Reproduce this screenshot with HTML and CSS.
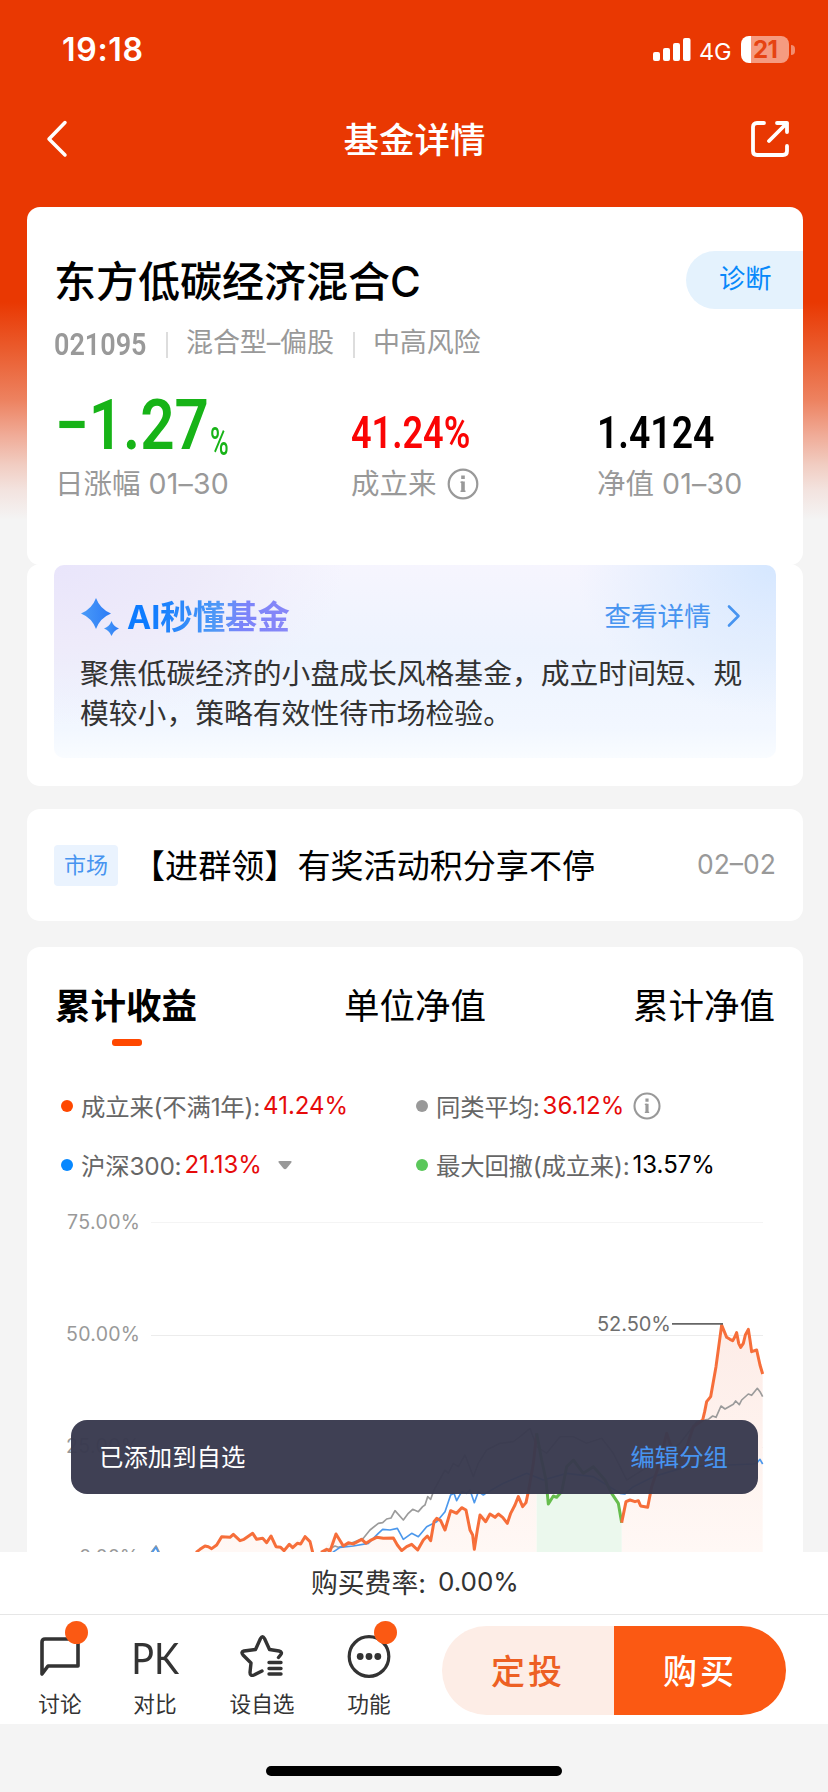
FILE: index.html
```html
<!DOCTYPE html>
<html lang="zh-CN">
<head>
<meta charset="utf-8">
<title>基金详情</title>
<link rel="stylesheet" href="styles.css">
</head>
<body>
<div class="page">
  <main class="content">
    <header class="status">
      <span class="time">19:18</span>
      <div class="status-right">
        <svg class="signal" width="38" height="24" viewBox="0 0 38 24" fill="#fff"><rect x="0" y="14" width="7" height="9" rx="2"/><rect x="10" y="10" width="7" height="13" rx="2"/><rect x="20" y="5" width="7" height="18" rx="2"/><rect x="30" y="0" width="7.500" height="23" rx="2"/></svg>
        <span class="net">4G</span>
        <div class="battery"><span>21</span></div>
        <i class="battery-cap"></i>
      </div>
    </header>
    <nav class="nav">
      <svg width="24" height="40" viewBox="0 0 24 40" fill="none" stroke="#fff" stroke-width="3.500" stroke-linecap="round" stroke-linejoin="round"><path d="M20 3.500 4 20 20 36"/></svg>
      <h1>基金详情</h1>
      <svg width="40" height="40" viewBox="0 0 40 40" fill="none" stroke="#fff" stroke-width="3.800" stroke-linecap="round" stroke-linejoin="round"><path d="M14 4H7Q3 4 3 8V32Q3 36 7 36H33Q37 36 37 32V27M27 4H37V13M37 4 19 22"/></svg>
    </nav>

    <section class="card summary">
      <div class="title-row"><h2>东方低碳经济混合C</h2><a class="diagnose">诊断</a></div>
      <div class="meta"><b class="din code">021095</b><i></i><span>混合型–偏股</span><i></i><span>中高风险</span></div>
      <div class="stats">
        <div class="stat">
          <div class="num green"><span class="din big">−1.27</span><span class="din pct">%</span></div>
          <div class="label">日涨幅 <span>01–30</span></div>
        </div>
        <div class="stat">
          <div class="num red"><span class="din mid">41.24%</span></div>
          <div class="label">成立来<svg class="info" width="32" height="32" viewBox="0 0 32 32" fill="none" stroke="#999" stroke-width="2.200"><circle cx="16" cy="16" r="14.300"/><path stroke-width="3.600" d="M16 13.500V24M16 7.500V11"/><path stroke-width="1.500" d="M13.500 14.200H16M13.500 23.300H18.500"/></svg></div>
        </div>
        <div class="stat">
          <div class="num"><span class="din mid nav-value">1.4124</span></div>
          <div class="label">净值 <span>01–30</span></div>
        </div>
      </div>
    </section>

    <section class="card ai">
      <div class="ai-panel">
        <div class="ai-head">
          <svg width="42" height="42" viewBox="0 0 42 42"><defs><linearGradient id="spark"><stop stop-color="#4a9bf8"/><stop offset="1" stop-color="#2c7bf6"/></linearGradient></defs><g fill="url(#spark)"><path d="M16 3Q20 14 31 18.500 20 23 16 34 12 23 1 18.500 12 14 16 3Z"/><path d="M31.500 26Q33.500 31.500 39 33.500 33.500 35.500 31.500 41 29.500 35.500 24 33.500 29.500 31.500 31.500 26Z"/></g></svg>
          <strong>AI秒懂基金</strong>
          <a>查看详情</a>
          <svg width="14" height="24" viewBox="0 0 14 24" fill="none" stroke="#4794f0" stroke-width="2.600" stroke-linecap="round" stroke-linejoin="round"><path d="M2 2.500 11.500 12 2 21.500"/></svg>
        </div>
        <p>聚焦低碳经济的小盘成长风格基金，成立时间短、规<br>模较小，策略有效性待市场检验。</p>
      </div>
    </section>

    <section class="card notice"><span class="tag">市场</span><span class="notice-text">【进群领】有奖活动积分享不停</span><time>02–02</time></section>

    <section class="card chart-card">
      <div class="tabs"><b>累计收益</b><span>单位净值</span><span>累计净值</span></div>
      <div class="legend">
        <div><i class="dot orange"></i>成立来(不满1年):<em>41.24%</em></div>
        <div><i class="dot gray"></i>同类平均:<em>36.12%</em><svg class="info" width="28" height="28" viewBox="0 0 32 32" fill="none" stroke="#999" stroke-width="2.400"><circle cx="16" cy="16" r="14.300"/><path stroke-width="3.600" d="M16 13.500V24M16 7.500V11"/><path stroke-width="1.500" d="M13.500 14.200H16M13.500 23.300H18.500"/></svg></div>
        <div><i class="dot blue"></i>沪深300:<em>21.13%</em><svg class="caret" width="14" height="9" viewBox="0 0 14 9"><path d="M1.500 0H12.500Q14.500 0 13 2L8.500 7.500Q7 9 5.500 7.500L1 2Q-.5 0 1.500 0Z" fill="#999"/></svg></div>
        <div><i class="dot lime"></i>最大回撤(成立来):<em class="dark">13.57%</em></div>
      </div>
      <svg class="chart" width="776" height="352" viewBox="27 1200 776 352">
        <defs><linearGradient id="warm" x1="0" y1="0" x2="0" y2="1"><stop stop-color="#fdece7"/><stop offset="1" stop-color="#fff8f5"/></linearGradient></defs>
        <g stroke="#ececec" stroke-width="1.200"><path stroke="#f4f4f4" d="M151 1222.500H763"/><path d="M151 1335.500H763M151 1447.500H763"/></g>
        <g class="axis"><text x="67" y="1228.500" textLength="73">75.00%</text><text x="66" y="1340.500" textLength="74">50.00%</text><text x="66" y="1452.500" textLength="74">25.00%</text><text x="79" y="1563.800" textLength="60">0.00%</text></g>
        <g transform="translate(420 1300) scale(.33333)" fill="none" stroke-linejoin="round" stroke-linecap="butt">
          <path fill="url(#warm)" d="M-670 756V755L-645 738-625 745-595 710-570 712-560 703-540 722-502 700-490 718-460 728-447 708-432 740-408 752-392 733-345 710-322 756H-295L-252 702-230 738-175 718-130 712-80 714-55 752-25 733-7 750 22 708 32 722 50 655 75 690 92 632 125 623 138 630 163 748 180 645 210 642 248 645 262 670 295 590 308 620 326 570 350 400V756ZM605 756V668L618 605 655 602 662 618 683 622 695 560 740 400 770 470 800 440 820 365 848 360 872 290 888 200 905 75 920 112 938 122 950 98 962 142 985 88 995 155 1010 150 1028 222V756Z"/>
          <path fill="#ebf8ed" d="M350 756V400L378 540 385 612 400 588 425 575 440 500 490 520 555 540 575 580 595 610 605 668V756Z"/>
          <g stroke="#9b9b9b" stroke-width="5"><path d="M-806 757-792 738-782 757M-290 757-255 738-245 742-220 735-170 715-150 690-125 670-112 668-100 657-87 654-75 632-50 660-35 640-22 628-5 635 8 620 15 615 23 590 32 598 42 570 75 510 85 520 100 490 115 500 135 465 160 530 175 490 200 450 240 430 280 425 300 410 330 385 350 440 380 460 420 410 460 410 500 430 545 415 580 460 600 500 620 540 700 490 780 430 830 365 865 358 878 348 888 352 903 318 915 327 940 313 947 303 958 314 965 300 985 282 995 286 1012 265 1020 275 1028 290"/></g>
          <path stroke="#4c98ec" stroke-width="5" d="M-803 757-792 742-785 757M-262 757-240 742-200 738-155 730-125 700-112 688-90 690-68 685-50 718-25 700-5 710 20 680 50 665 75 635 92 585 102 580 110 602 125 575 140 580 150 570 163 608 175 575 190 585 200 578 250 550 320 520 370 540 440 520 520 530 600 580 615 582 640 560 700 530 800 500 1000 492 1010 490 1020 478 1028 492"/>
          <g stroke="#f66e3a" stroke-width="9"><path d="M-672 757-660 748-645 738-635 740-625 746-610 735-595 710-570 712-560 703-540 722-528 718-502 700-490 718-472 715-460 728-447 708-432 740-418 742-408 752-392 733-382 743-368 730-358 732-345 710-330 725-322 757M-297 757-280 748-270 754-252 702-230 738-215 728-200 732-175 718-162 730-150 722-130 712-110 715-80 714-68 735-55 752-40 740-25 733-7 750 10 720 22 708 32 722 42 665 50 655 62 662 75 690 92 632 110 640 125 623 138 630 150 690 158 705 163 748 172 690 180 645 197 665 210 642 225 652 235 642 248 652 262 670 272 640 285 615 295 590 308 620 318 608 326 570 340 490 350 400"/><path stroke="#66bd4d" d="M350 400 365 480 378 540 385 612 400 588 410 592 425 575 440 500 460 480 490 520 520 500 555 540 575 580 595 610 605 668"/><path d="M605 668 618 605 630 600 645 605 655 602 662 618 683 622 695 560 715 500 740 400 750 430 770 470 800 440 820 380 848 360 854 335 860 305 872 290 888 200 905 75 920 112 930 118 938 122 944 112 950 98 956 130 962 142 970 130 976 105 985 88 990 120 995 155 1010 150 1020 195 1028 222"/></g>
        </g>
        <path stroke="#666" stroke-width="1.800" d="M672 1323.800H723"/>
        <text class="peak" x="597" y="1331" textLength="74">52.50%</text>
      </svg>
    </section>
  </main>

  <div class="fee">购买费率:<span>0.00%</span></div>
  <footer class="toolbar">
    <div class="tool t1"><div class="icon"><svg width="46" height="46" viewBox="0 0 46 46" fill="none" stroke="#333" stroke-width="3.600" stroke-linejoin="round"><path d="M5 41V9Q5 6 8 6H38Q41 6 41 9V33H11Z"/></svg><i class="badge"></i></div><span>讨论</span></div>
    <div class="tool t2"><div class="icon pk">PK</div><span>对比</span></div>
    <div class="tool t3"><div class="icon"><svg width="46" height="46" viewBox="0 0 46 46" fill="none" stroke="#333" stroke-width="3.400" stroke-linejoin="round" stroke-linecap="round"><path d="M39.500 24.500 41.500 22Q44 19 40 18L30.500 16.500 25.500 5.500Q23.500 2 21.500 5.500L16.500 16.500 5 18Q1.500 19 4 22L12 30 11 39.500Q11 43.500 15 42L23 38M30 29.500H42M30 35.500H42M30 41H42"/></svg></div><span>设自选</span></div>
    <div class="tool t4"><div class="icon"><svg width="46" height="46" viewBox="0 0 46 46" fill="none" stroke="#333" stroke-width="3.200"><circle cx="23" cy="23.500" r="19.800"/><g fill="#333" stroke="none"><circle cx="14.200" cy="23.500" r="3.400"/><circle cx="23" cy="23.500" r="3.400"/><circle cx="31.800" cy="23.500" r="3.400"/></g></svg><i class="badge"></i></div><span>功能</span></div>
    <div class="actions"><button class="plan">定投</button><button class="buy">购买</button></div>
  </footer>
  <div class="home"><i></i></div>

  <div class="toast"><span>已添加到自选</span><a>编辑分组</a></div>
</div>
</body>
</html>
```

FILE: styles.css
```css
* { box-sizing: border-box; margin: 0; padding: 0; }
body { font-family: Inter, "Noto Sans CJK SC", sans-serif; color: #000; background: #f4f4f4; }
svg { flex: none; display: block; }
em, i { font-style: normal; }
.page { position: relative; width: 828px; height: 1792px; overflow: hidden; white-space: nowrap; }
.content {
  height: 1552px; overflow: hidden;
  background: linear-gradient(#e93802 0, #e93802 302px, #ea5c2e 350px, #ed8260 400px, #f0ab97 435px, #f1cdc2 465px, #f3e3df 490px, #f4f4f4 520px);
}
.card { width: 776px; margin-left: 27px; background: #fff; border-radius: 13px; }

.status { display: flex; align-items: center; height: 99px; padding: 0 33px 0 62px; color: #fff; }
.time { font-size: 32px; font-weight: 600; letter-spacing: .7px; }
.status-right { display: flex; align-items: center; margin-left: auto; }
.net { width: 33px; margin: 3px 9px 0 8px; font-size: 23.500px; letter-spacing: -.3px; }
.battery { width: 48px; height: 27px; border-radius: 8px; background: linear-gradient(90deg, #fff 10px, #f59b80 10px); color: #e64312; font-size: 24px; font-weight: 700; line-height: 27px; text-align: center; letter-spacing: -.8px; }
.battery-cap { width: 4px; height: 10px; margin-left: 2px; background: #f28d6f; border-radius: 0 5px 5px 0; }
.nav { display: flex; align-items: center; justify-content: space-between; height: 80px; margin-bottom: 28px; padding: 0 38px 0 45px; color: #fff; }
.nav h1 { padding: 4px 0 0 10px; font-size: 35.500px; font-weight: 500; line-height: 50px; }

.summary { height: 358px; padding: 44px 0 0 27px; }
.title-row { display: flex; align-items: center; justify-content: space-between; height: 58px; }
.title-row h2 { padding-top: 3px; font-size: 42px; font-weight: 500; line-height: 58px; }
.diagnose { width: 117px; height: 58px; border-radius: 29px 0 0 29px; background: #e4f2fd; color: #0788fa; font-size: 26.300px; line-height: 56px; padding-left: 33px; }
.meta { display: flex; align-items: center; height: 30px; margin-top: 19px; color: #999; font-size: 27px; line-height: 30px; }
.meta i { width: 2px; height: 26px; margin: 4px 18px 0 19px; background: #ddd; }
.meta span { letter-spacing: -.1px; }
.din { display: inline-block; font-family: Roboto, sans-serif; font-weight: 600; transform-origin: 0 50%; line-height: 1; }
.code { width: 93px; font-size: 31px; transform: scaleX(.87); margin-top: 2px; }
.stats { display: grid; grid-template-columns: 296px 246px 1fr; margin-top: 39px; padding-left: 1px; }
.num { height: 56px; display: flex; align-items: flex-end; }
.big { font-size: 70px; width: 155px; transform: scaleX(.86); margin-bottom: -7px; }
.pct { font-size: 39px; transform: scaleX(.65); font-weight: 500; margin-bottom: -9px; }
.mid { font-size: 44px; transform: scaleX(.85); margin-bottom: -2px; }
.red .mid { transform: scaleX(.82); }
.green { color: #17b317; }
.red { color: #fa0404; }
.label { display: flex; align-items: center; height: 40px; margin-top: 11px; color: #999; font-size: 28.500px; line-height: 40px; white-space: pre; }
.label span { letter-spacing: .2px; }
.label .info { margin-left: 10px; }

.ai { height: 222px; margin-top: -1px; padding: 1px 27px 0; }
.ai-panel { height: 193px; padding: 29px 26px 0; border-radius: 10px; background: radial-gradient(ellipse 200px 150px at 100% 0, #d5e7ff, transparent), radial-gradient(ellipse 290px 160px at 0 0, #e9e5fb, #eeebfa 50%, transparent), linear-gradient(#f6f5fe, #edf3fe 45%, #f2f7ff 85%, #f9fcff); }
.ai-head { display: flex; align-items: center; height: 44px; }
.ai-head strong { margin: 3px auto 0 5px; font-size: 32.400px; line-height: 44px; background: linear-gradient(100deg, #0d7bff 15%, #5199f6 55%, #7b83fa 70%, #8988f7); -webkit-background-clip: text; color: transparent; }
.ai-head a { margin: -3px 16px 0 0; color: #4794f0; font-size: 26.700px; }
.ai-head svg:last-child { margin-right: 9px; }
.ai p { margin-top: 16px; font-size: 28.800px; line-height: 40px; color: #333; }

.notice { display: flex; align-items: center; height: 112px; margin-top: 23px; padding: 0 27px; }
.tag { width: 64px; height: 41px; border-radius: 4px; background: #eaf3fe; color: #4794f0; font-size: 22px; line-height: 40px; text-align: center; }
.notice-text { margin: -3px 0 0 14px; font-size: 33.100px; }
.notice time { margin: -3px 0 0 auto; color: #999; font-size: 26.500px; }

.chart-card { height: 605px; margin-top: 26px; border-radius: 13px 13px 0 0; }
.tabs { display: flex; justify-content: space-between; height: 128px; padding: 35px 28px 0 28px; font-size: 35.500px; line-height: 50px; }
.tabs b { position: relative; }
.tabs b::after { content: ""; position: absolute; left: 57px; top: 57px; width: 30px; height: 7px; border-radius: 3px; background: #ff4800; }
.legend { display: grid; grid-template-columns: 355px 1fr; grid-template-rows: 59px 59px; padding: 1px 0 0 34px; height: 125px; font-size: 24.400px; letter-spacing: -.2px; color: #666; }
.legend div { display: flex; align-items: center; }
.legend em { margin-left: 3px; color: #e60a0a; font-size: 24px; letter-spacing: 0; }
.legend .dark { color: #000; }
.legend .info { margin-left: 9px; }
.caret { margin: 2px 0 0 16px; }
.dot { width: 12px; height: 12px; border-radius: 50%; margin-right: 8px; }
.orange { background: #ff4800; } .gray { background: #999; } .blue { background: #0788ff; } .lime { background: #5bc75b; }
.axis { fill: #999; font-size: 19.500px; }
.peak { fill: #6f6f6f; font-size: 20px; }

.fee { display: flex; align-items: center; height: 62px; padding: 0 0 3px 311px; background: #fff; font-size: 26.800px; color: #333; }
.fee span { margin-left: 12px; font-size: 26px; }
.toolbar { display: flex; height: 110px; padding: 11px 0 0 28px; background: #fff; border-top: 1px solid #e6e6e6; }
.tool { display: flex; flex-direction: column; align-items: center; padding-top: 7px; color: #333; font-size: 21.700px; line-height: 32px; }
.tool > span { margin-top: 9px; }
.t1 { width: 64px; } .t2 { width: 126px; } .t3 { width: 88px; } .t4 { width: 126px; }
.icon { position: relative; height: 46px; }
.pk { font: 400 43px/50px Lato, sans-serif; transform: scaleX(.88); }
.badge { position: absolute; right: -5px; top: -12px; width: 23px; height: 23px; border-radius: 50%; background: #fb5913; }
.actions { display: grid; grid-template-columns: 172px 172px; width: 344px; height: 89px; margin-left: 10px; border-radius: 45px; overflow: hidden; }
button { padding-bottom: 2px; border: 0; font: 500 34px Inter, "Noto Sans CJK SC", sans-serif; letter-spacing: 3px; }
.plan { background: #fdede6; color: #ed6023; }
.buy { background: #fb5913; color: #fff; }
.home { display: flex; justify-content: center; padding-top: 42px; height: 68px; background: #f4f4f4; }
.home i { width: 296px; height: 10px; border-radius: 5px; background: #000; }
.toast { position: absolute; left: 71px; top: 1420px; width: 687px; height: 74px; display: flex; align-items: center; justify-content: space-between; padding: 0 30px 4px 28px; border-radius: 16px; background: rgba(57, 58, 78, .97); color: #fff; font-size: 24.400px; }
.toast a { color: #4794f0; }
```
